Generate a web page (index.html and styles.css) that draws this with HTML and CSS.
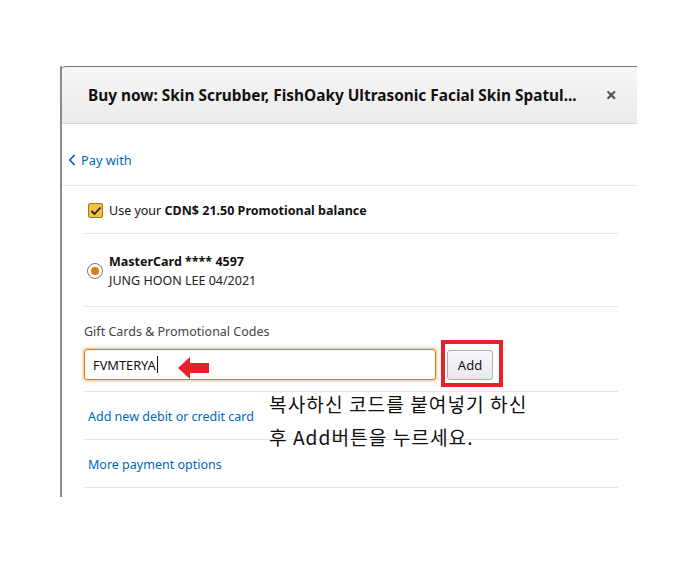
FILE: index.html
```html
<!doctype html>
<html>
<head>
    <title>Buy now</title>
    <meta charset="utf-8">
    <link rel="stylesheet" href="styles.css">
</head>
<body>
    <div class="frame">
        <div class="modal">
            <header class="modal-header">
                <h1>Buy now: Skin Scrubber, FishOaky Ultrasonic Facial Skin Spatul...</h1>
                <span class="close">&times;</span>
            </header>
            <div class="back-row">
                <a class="back-link" href="#">
                    <svg width="8" height="12" viewBox="0 0 8 12"><path d="M6.5 1 L1.8 6 L6.5 11" fill="none" stroke="#0066c0" stroke-width="1.8"/></svg>
                    Pay with
                </a>
            </div>
            <div class="content">
                <div class="row row-balance">
                    <span class="checkbox">
                        <svg width="12" height="10" viewBox="0 0 12 10"><path d="M1.5 5 L4.5 8 L10.5 1.5" fill="none" stroke="#222" stroke-width="1.8"/></svg>
                    </span>
                    <span>Use your <b>CDN$ 21.50 Promotional balance</b></span>
                </div>
                <div class="row row-card">
                    <span class="radio"><span class="dot"></span></span>
                    <div class="card-info">
                        <b>MasterCard **** 4597</b>
                        <span>JUNG HOON LEE 04/2021</span>
                    </div>
                </div>
                <div class="row row-gift">
                    <label class="gift-label">Gift Cards &amp; Promotional Codes</label>
                    <div class="gift-form">
                        <div class="gift-input">FVMTERYA<span class="caret"></span></div>
                        <button class="btn-add">Add</button>
                    </div>
                    <svg class="arrow" width="32" height="22" viewBox="0 0 32 22"><path d="M0 11 L12 0 L12 6 L31 6 L31 16 L12 16 L12 22 Z" fill="#e8202a"/></svg>
                    <span class="highlight"></span>
                </div>
                <div class="row row-link"><a href="#">Add new debit or credit card</a></div>
                <div class="row row-link"><a href="#">More payment options</a></div>
            </div>
            <p class="note">복사하신 코드를 붙여넣기 하신<br>후 Add버튼을 누르세요.</p>
        </div>
    </div>
</body>
</html>
```

FILE: styles.css
```css
* {
    margin: 0;
    padding: 0;
    box-sizing: border-box;
}

body {
    background: #ffffff;
    padding: 66px 0 0 60px;
    font-family: "Noto Sans", "Open Sans", sans-serif;
    color: #111111;
}

.frame {
    width: 577px;
    height: 431px;
    border-left: 2px solid #8c8c8c;
}

.modal {
    position: relative;
    height: 100%;
    background: #ffffff;
}

.modal-header {
    display: flex;
    align-items: center;
    justify-content: space-between;
    height: 58px;
    padding: 0 20px 0 26px;
    background: linear-gradient(to bottom, #f6f6f6, #ebebeb);
    border-top: 1px solid #7a7a7a;
    border-bottom: 1px solid #d9d9d9;
    border-top-left-radius: 4px;
}

.modal-header h1 {
    font-size: 15.4px;
    font-weight: bold;
    color: #111111;
    white-space: nowrap;
}

.close {
    font-size: 20px;
    color: #555555;
    font-weight: bold;
    line-height: 1;
}

.back-row {
    height: 62px;
    padding: 27px 0 0 6px;
    border-bottom: 1px solid #e7e7e7;
}

.back-link {
    display: flex;
    align-items: center;
    gap: 5px;
    color: #0066c0;
    font-size: 12.8px;
    text-decoration: none;
}

.content {
    padding: 0 19px 0 22px;
}

.row {
    border-bottom: 1px solid #e7e7e7;
    font-size: 12.5px;
}

.row-balance {
    display: flex;
    align-items: center;
    gap: 6px;
    height: 48px;
    padding: 2px 0 0 4px;
}

.checkbox {
    display: flex;
    align-items: center;
    justify-content: center;
    width: 15px;
    height: 15px;
    background: #f5c040;
    border: 1px solid #9a7a2a;
    border-radius: 2px;
}

.row-card {
    display: flex;
    align-items: center;
    gap: 6px;
    height: 73px;
    padding: 2px 0 0 3px;
}

.radio {
    display: flex;
    align-items: center;
    justify-content: center;
    width: 16px;
    height: 16px;
    border: 1px solid #777777;
    border-radius: 50%;
}

.dot {
    width: 8px;
    height: 8px;
    background: #e47911;
    border-radius: 50%;
}

.card-info {
    display: flex;
    flex-direction: column;
    line-height: 19px;
}

.card-info span {
    color: #222222;
}

.row-gift {
    position: relative;
    height: 85px;
    padding-top: 16px;
}

.gift-label {
    display: block;
    color: #444444;
    line-height: 18px;
}

.gift-form {
    display: flex;
    align-items: center;
    gap: 11px;
    margin-top: 8px;
}

.gift-input {
    display: flex;
    align-items: center;
    width: 352px;
    height: 31px;
    padding-left: 8px;
    border: 1px solid #e77600;
    border-radius: 3px;
    box-shadow: 0 0 3px 1px rgba(228, 121, 17, 0.5);
    font-size: 12.8px;
    color: #111111;
}

.caret {
    display: inline-block;
    width: 1px;
    height: 17px;
    background: #111111;
    margin-left: 1px;
}

.btn-add {
    width: 46px;
    height: 30px;
    background: linear-gradient(to bottom, #f7f8fa, #e7e9ec);
    border: 1px solid #adb1b8;
    border-radius: 3px;
    font-family: "Noto Sans", sans-serif;
    font-size: 13px;
    color: #111111;
}

.arrow {
    position: absolute;
    left: 94px;
    top: 50px;
}

.highlight {
    position: absolute;
    left: 357px;
    top: 33px;
    width: 62px;
    height: 47px;
    border: 4px solid #e8202a;
}

.row-link {
    display: flex;
    align-items: center;
    height: 48px;
    padding: 2px 0 0 4px;
}

.row-link a {
    color: #0066c0;
    text-decoration: none;
}

.note {
    position: absolute;
    left: 207px;
    top: 322px;
    font-family: "Noto Sans CJK KR", sans-serif;
    font-size: 19.2px;
    line-height: 33px;
    color: #111111;
    letter-spacing: 1px;
}
```
